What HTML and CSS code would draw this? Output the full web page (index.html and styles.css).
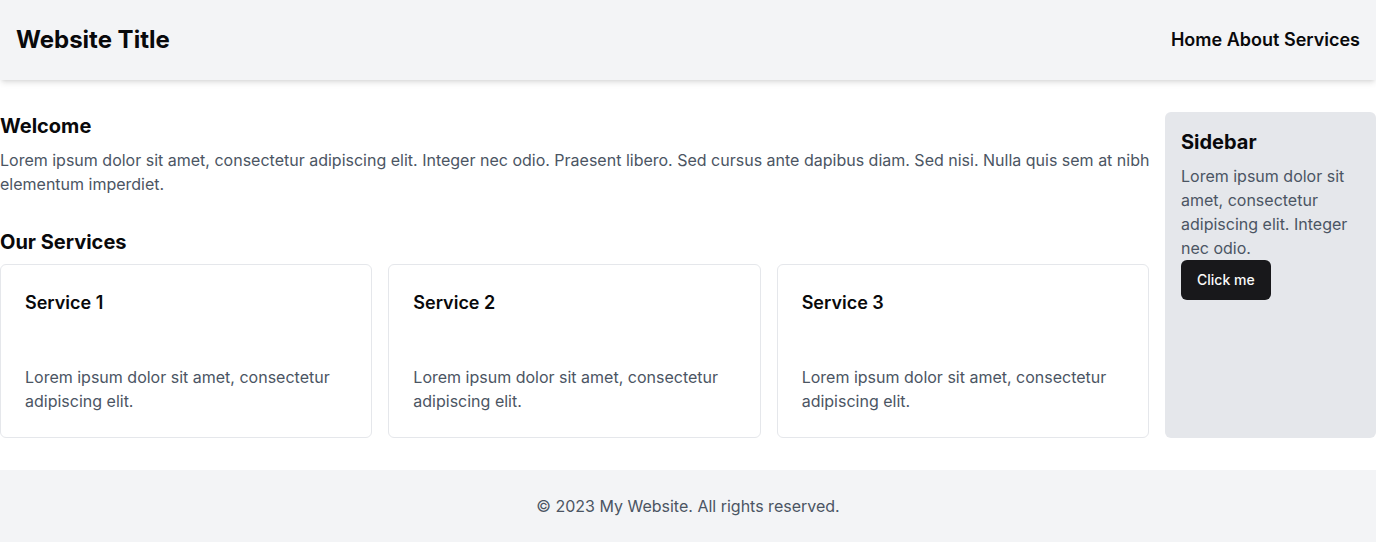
FILE: index.html
```html
<!DOCTYPE html>
<html lang="en">
<head>
<meta charset="utf-8">
<title>Website Title</title>
<link rel="stylesheet" href="styles.css">
</head>
<body>
<header class="site-header">
  <h1 class="site-title">Website Title</h1>
  <nav class="site-nav"><a href="#">Home</a> <a href="#">About</a> <a href="#">Services</a></nav>
</header>
<main class="layout">
  <div class="content">
    <section class="welcome">
      <h2 class="section-title">Welcome</h2>
      <p class="text welcome-text">Lorem ipsum dolor sit amet, consectetur adipiscing elit. Integer nec odio. Praesent libero. Sed cursus ante dapibus diam. Sed nisi. Nulla quis sem at nibh elementum imperdiet.</p>
    </section>
    <section class="services">
      <h2 class="section-title services-title">Our Services</h2>
      <div class="cards">
        <div class="card">
          <h3 class="card-title">Service 1</h3>
          <p class="text">Lorem ipsum dolor sit amet, consectetur adipiscing elit.</p>
        </div>
        <div class="card">
          <h3 class="card-title">Service 2</h3>
          <p class="text">Lorem ipsum dolor sit amet, consectetur adipiscing elit.</p>
        </div>
        <div class="card">
          <h3 class="card-title">Service 3</h3>
          <p class="text">Lorem ipsum dolor sit amet, consectetur adipiscing elit.</p>
        </div>
      </div>
    </section>
  </div>
  <aside class="sidebar">
    <h2 class="section-title">Sidebar</h2>
    <p class="text sidebar-text">Lorem ipsum dolor sit amet, consectetur adipiscing elit. Integer nec odio.</p>
    <button class="btn">Click me</button>
  </aside>
</main>
<footer class="site-footer">
  <p class="text">© 2023 My Website. All rights reserved.</p>
</footer>
</body>
</html>
```
FILE: styles.css
```css
* { box-sizing: border-box; }
html, body { margin: 0; padding: 0; }
body {
  font-family: Inter, "Noto Sans", sans-serif;
  color: #09090b;
  background: #ffffff;
}
h1, h2, h3, p { margin: 0; }

.site-header {
  height: 80px;
  padding: 0 16px;
  background: #f3f4f6;
  display: flex;
  align-items: center;
  justify-content: space-between;
  box-shadow: 0 4px 6px -1px rgba(0,0,0,0.1), 0 2px 4px -2px rgba(0,0,0,0.1);
  position: relative;
}
.site-title {
  font-size: 24px;
  line-height: 32px;
  font-weight: 700;
}
.site-nav {
  font-size: 18px;
  line-height: 28px;
  font-weight: 600;
}
.site-nav a { color: #09090b; text-decoration: none; }

.layout {
  display: flex;
  gap: 16px;
  padding-top: 32px;
  margin-bottom: 32px;
}
.content { flex: 1; min-width: 0; }

.section-title {
  font-size: 20px;
  line-height: 28px;
  font-weight: 700;
}
.text {
  font-size: 16px;
  line-height: 24px;
  color: #4b5563;
}
.welcome { margin-bottom: 32px; }
.welcome-text { margin-top: 8px; margin-right: -8px; }
.services-title { margin-bottom: 8px; }

.cards {
  display: grid;
  grid-template-columns: repeat(3, 1fr);
  gap: 16px;
}
.card {
  border: 1px solid #e5e7eb;
  border-radius: 6px;
  padding: 24px;
  background: #fff;
}
.card-title {
  font-size: 18px;
  line-height: 28px;
  font-weight: 600;
  margin-bottom: 48px;
}

.sidebar {
  width: 211px;
  flex-shrink: 0;
  background: #e5e7eb;
  border-radius: 6px;
  padding: 16px;
}
.sidebar-text { margin-top: 8px; }
.btn {
  font-family: inherit;
  font-size: 14px;
  line-height: 20px;
  font-weight: 500;
  color: #fafafa;
  background: #18181b;
  border: none;
  border-radius: 6px;
  height: 40px;
  padding: 0 16px;
}

.site-footer {
  background: #f3f4f6;
  padding: 24px;
  text-align: center;
}
```
